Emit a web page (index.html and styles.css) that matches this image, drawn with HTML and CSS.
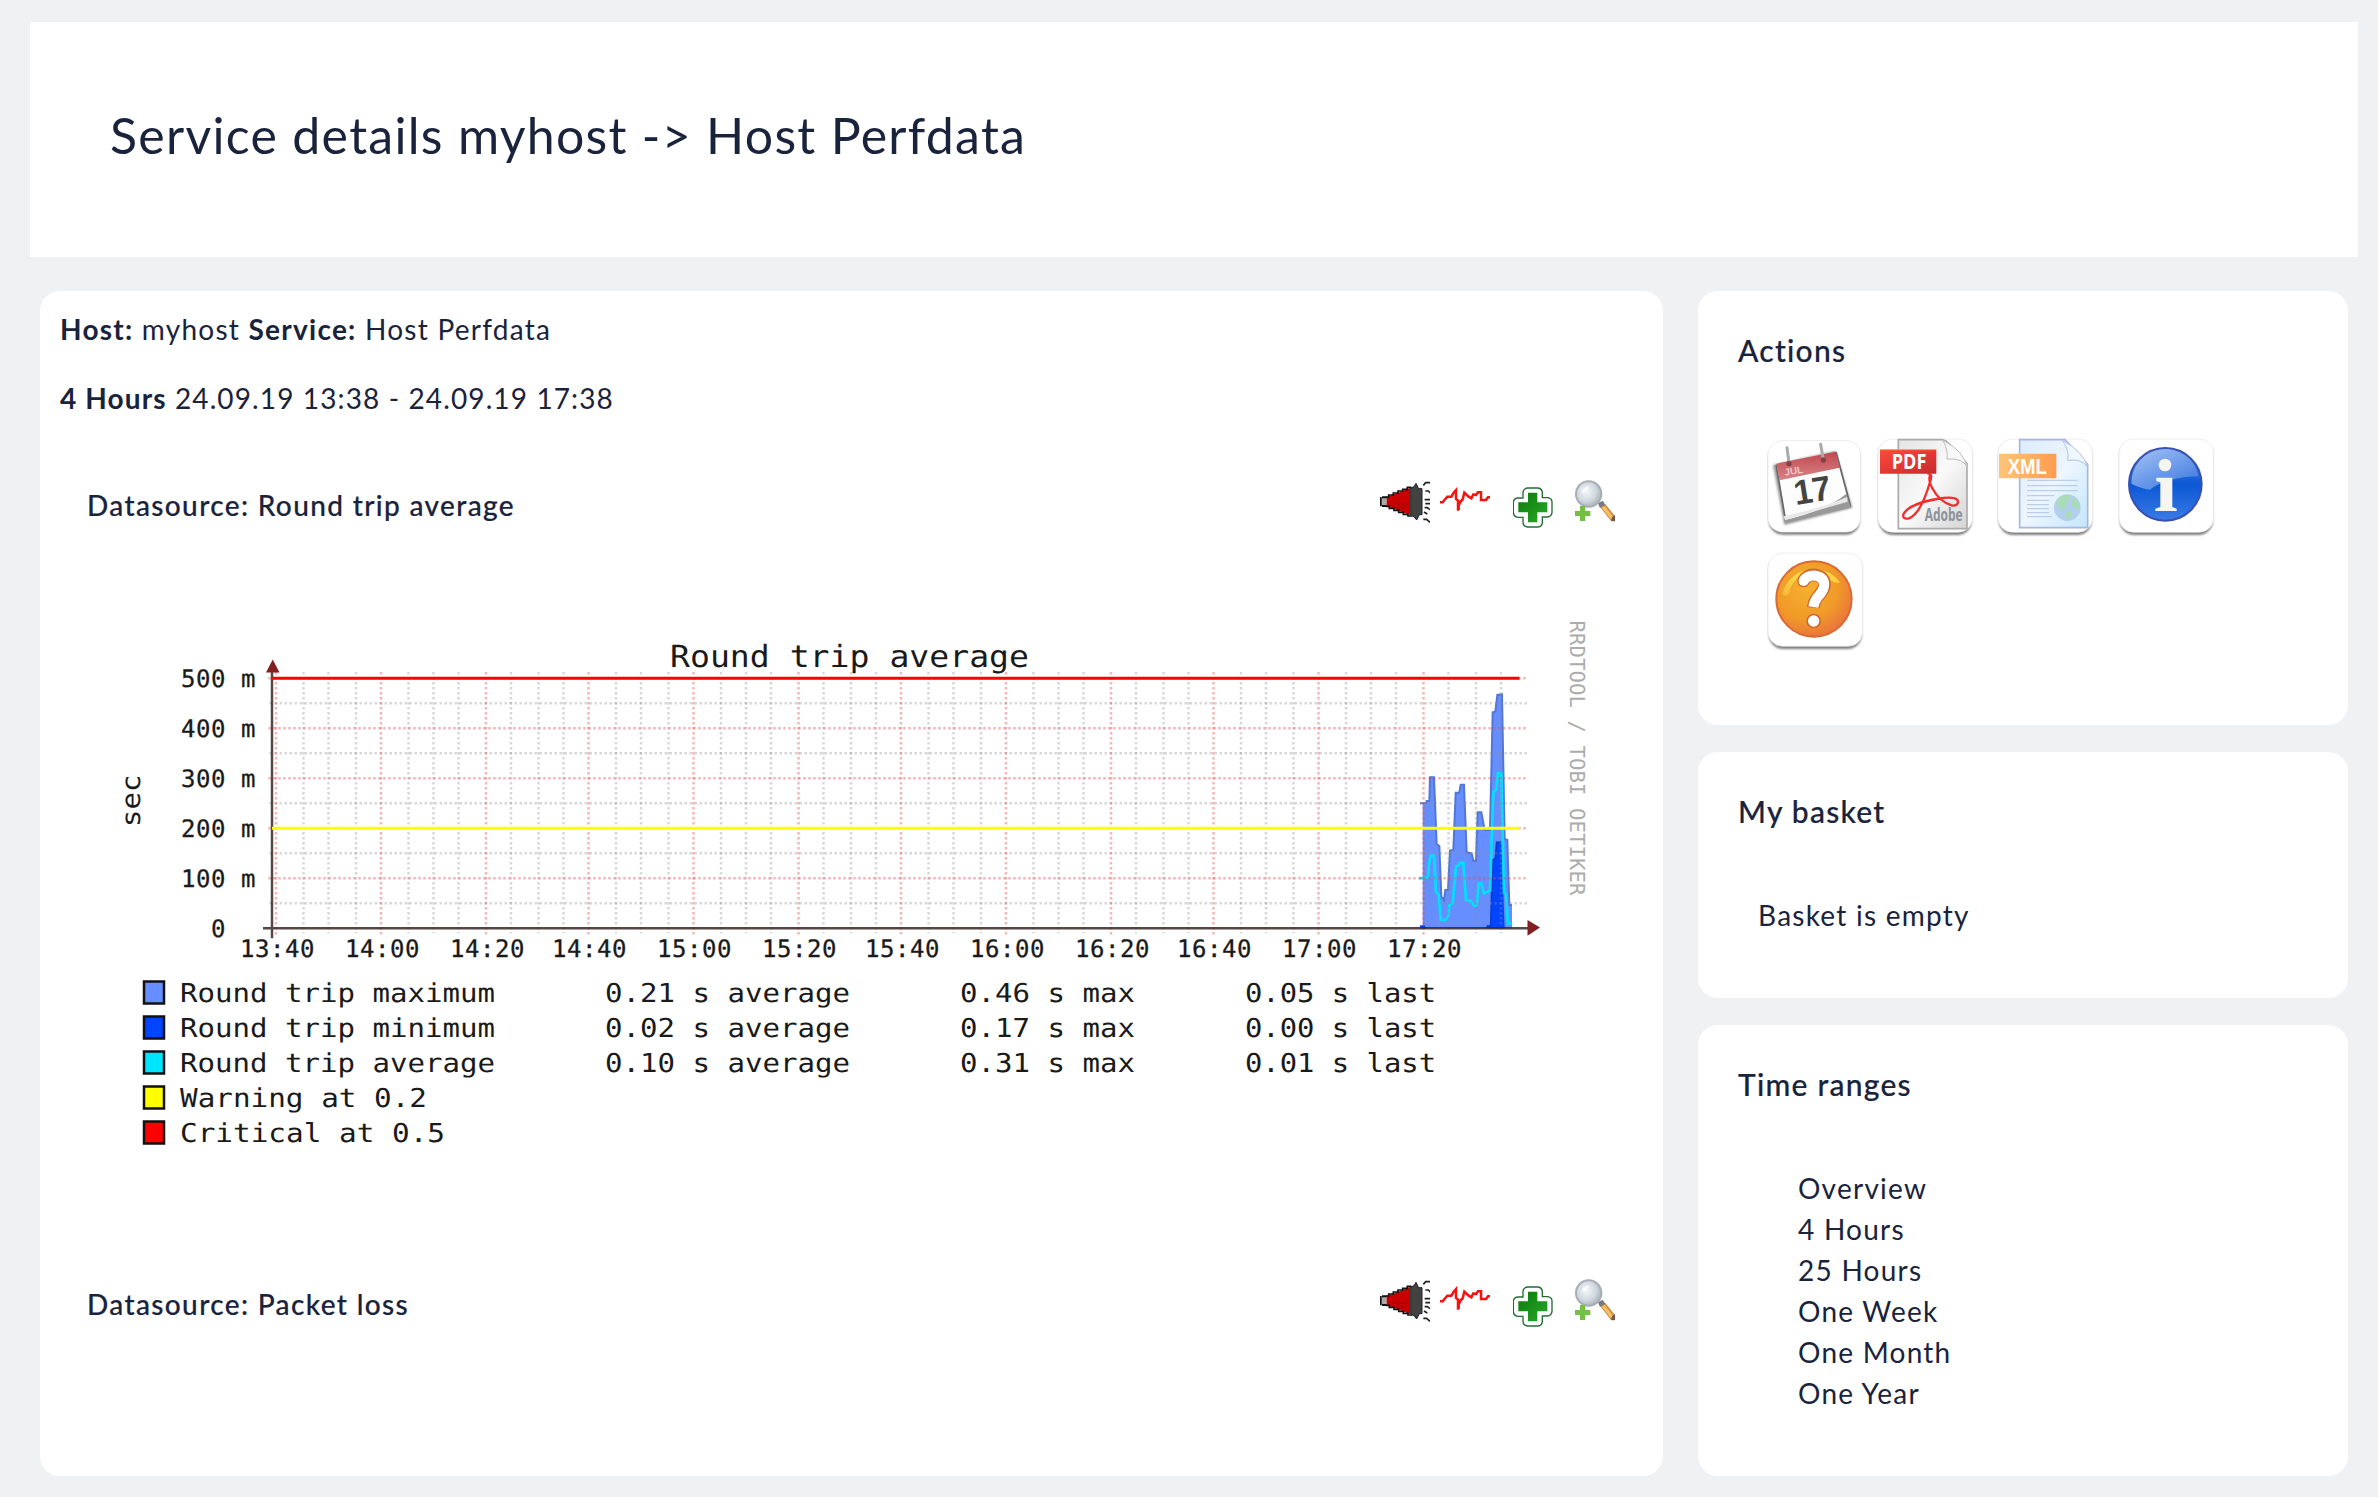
FILE: index.html
```html
<!DOCTYPE html>
<html lang="en">
<head>
<meta charset="utf-8">
<title>Service details</title>
<link rel="stylesheet" href="styles.css">
</head>
<body>
<svg class="defs" aria-hidden="true">
  <defs>
    <linearGradient id="tilePaper" x1="0" y1="0" x2="1" y2="1"><stop offset="0" stop-color="#e4e4e4"/><stop offset=".5" stop-color="#fafafa"/><stop offset="1" stop-color="#d4d4d4"/></linearGradient>
    <linearGradient id="xmlPaper" x1="0" y1="0" x2="1" y2="1"><stop offset="0" stop-color="#dcebfb"/><stop offset=".5" stop-color="#edf6ff"/><stop offset="1" stop-color="#c4e6fc"/></linearGradient>
    <linearGradient id="pdfTag" x1="0" y1="0" x2="1" y2="1"><stop offset="0" stop-color="#ff4a3c"/><stop offset="1" stop-color="#c62a2e"/></linearGradient>
    <linearGradient id="xmlTag" x1="0" y1="0" x2="1" y2="0"><stop offset="0" stop-color="#ffc578"/><stop offset="1" stop-color="#ff9c4e"/></linearGradient>
    <linearGradient id="calTop" x1="0" y1="0" x2="0" y2="1"><stop offset="0" stop-color="#bf4a50"/><stop offset="1" stop-color="#d98286"/></linearGradient>
    <linearGradient id="blueBall" x1="0" y1="0" x2="0" y2="1"><stop offset="0" stop-color="#5c8fe8"/><stop offset=".5" stop-color="#0b57d4"/><stop offset="1" stop-color="#3a7be6"/></linearGradient>
    <linearGradient id="blueShine" x1="0" y1="0" x2="1" y2="1"><stop offset="0" stop-color="#b4cdf8"/><stop offset="1" stop-color="#3f7ae0"/></linearGradient>
    <radialGradient id="orangeBall" cx=".4" cy=".35" r=".7"><stop offset="0" stop-color="#f6b030"/><stop offset=".6" stop-color="#f09a28"/><stop offset="1" stop-color="#ea7040"/></radialGradient>
    <linearGradient id="yellowShine" x1="0" y1="0" x2="0" y2="1"><stop offset="0" stop-color="#ffe04a"/><stop offset="1" stop-color="#f8b83a"/></linearGradient>
    <linearGradient id="greenCross" x1="0" y1="0" x2="1" y2="1"><stop offset="0" stop-color="#0a7a0a"/><stop offset="1" stop-color="#2aa82a"/></linearGradient>
    <radialGradient id="lens" cx=".4" cy=".4" r=".6"><stop offset="0" stop-color="#f4f7f9"/><stop offset=".7" stop-color="#cfd8de"/><stop offset="1" stop-color="#b4bcc4"/></radialGradient>
    <filter id="soft" x="-10%" y="-10%" width="120%" height="120%"><feGaussianBlur stdDeviation="3"/></filter>

    <symbol id="tile" viewBox="0 0 290 300">
      <rect x="5" y="12" width="280" height="282" rx="44" fill="#666" opacity=".85" filter="url(#soft)"/>
      <rect x="3" y="6" width="284" height="280" rx="44" fill="#fff" stroke="#e6e6e6" stroke-width="2"/>
    </symbol>

    <symbol id="horn" viewBox="60 60 150 135">
      <path d="M60 113h20v24h-20z" fill="#aaa"/>
      <path d="M62 111v28M66 112h14M66 138h14" stroke="#111" stroke-width="6"/>
      <path d="M80 112L150 84V165L80 138Z" fill="#c80000"/>
      <path d="M98 130l6 5 6-5 6 5 6-5 6 5 6-5 6 5 6-5M110 142l6 4 6-4 6 4 6-4" fill="none" stroke="#960000" stroke-width="3"/>
      <path d="M78 111H86V105H100V99H114V93H128V88H142V82H154M78 139H88V145H102V151H116V157H130V163H144V168H156" fill="none" stroke="#111" stroke-width="5"/>
      <path d="M152 84L162 80L168 70L176 86H186V164H178L170 180L162 170L152 166Z" fill="#424242" stroke="#222" stroke-width="3"/>
      <path d="M190 76L197 68H210M196 93H205L212 100M194 119h16M196 131h14M194 143h8l8 6M192 156l10 6M190 178h10l10 9" fill="none" stroke="#222" stroke-width="5"/>
    </symbol>
    <symbol id="pulse" viewBox="240 60 150 135">
      <path d="M240 127H248L254 119L262 110H274L281 98L288 90V117L294 122V152M296 150V136L302 124L308 118L313 98L326 110L334 115L340 103L348 105L354 97H363V120H378L384 112H390" fill="none" stroke="#fb1010" stroke-width="7.5"/>
    </symbol>
    <symbol id="cross" viewBox="459 60 120 144">
      <path d="M502 84H534Q546 86 547 97V113H564Q576 116 576 126V158Q574 170 562 171H547V188Q546 200 534 201H502Q490 199 489 188V172H473Q461 170 460 158V126Q462 115 474 114H489V97Q490 86 502 84Z" fill="#fff" stroke="#246b36" stroke-width="4"/>
      <path d="M504 98H532V127H562V157H532V187H504V157H475V127H504Z" fill="url(#greenCross)"/>
    </symbol>
    <symbol id="lensplus" viewBox="645 60 120 125">
      <path d="M716 136L736 132L765 168V183H753Z" fill="#c99042"/>
      <path d="M724 142L735 139L760 171L752 177Z" fill="#f6bd62"/>
      <path d="M714 130L728 122L736 134L720 144Z" fill="#777a80"/>
      <path d="M757 170l8-4v18h-12z" fill="#78564c"/>
      <circle cx="686" cy="102" r="41" fill="#a8adb6"/>
      <circle cx="686" cy="102" r="35" fill="url(#lens)"/>
      <path d="M664 98Q668 80 688 78Q684 96 664 98" fill="#fff" opacity=".7"/>
      <path d="M660 138H676V153H691V168H676V183H660V168H645V153H660Z" fill="#74c044"/>
    </symbol>
  </defs>
</svg>

<header class="page-header">
  <h1 class="page-title">Service details myhost -&gt; Host Perfdata</h1>
</header>

<div class="columns">
  <main class="card graphs">
    <p class="meta"><b>Host:</b> myhost <b>Service:</b> Host Perfdata</p>
    <p class="meta period"><b>4 Hours</b> 24.09.19 13:38 - 24.09.19 17:38</p>

    <section class="datasource">
      <div class="ds-head">
        <h2 class="ds-title">Datasource: Round trip average</h2>
        <div class="ds-tools">
          <svg class="tool horn"><use href="#horn"/></svg>
          <svg class="tool pulse"><use href="#pulse"/></svg>
          <svg class="tool cross"><use href="#cross"/></svg>
          <svg class="tool lens"><use href="#lensplus"/></svg>
        </div>
      </div>
      <svg class="chart" viewBox="0 0 1493 560">
        <g transform="translate(1273 30) scale(.33333)">
          <path d="M128 865V490H138L140 483H148L150 412H162L170 612L178 618L184 770L192 780L196 750H204L210 632L220 630L227 458H238L242 434H252L260 637L275 640L280 662H288L293 517H304L314 570H330L338 217L346 215L352 165L366 163L374 597L382 600L388 795H396V865Z" fill="#668eff"/>
          <path d="M120 490H138L140 483H148L150 412H162L170 612L178 618L184 770L192 780L196 750H204L210 632L220 630L227 458H238L242 434H252L260 637L275 640L280 662H288L293 517H304L314 570H330L338 217L346 215L352 165L366 163L374 597L382 600L388 795H396" fill="none" stroke="#5277d6" stroke-width="6"/>
          <path d="M120 865V856H134L138 865H318L322 856H332L338 660L346 655L350 607L364 605L374 865Z" fill="#0045ff"/>
          <path d="M320 858H332L338 660L346 655L350 607H364" fill="none" stroke="#0a3bd0" stroke-width="5"/>
          <path d="M118 715L144 712L146 678L152 647H162L168 757L176 762L182 840H196L206 828L208 795L218 790L228 680L238 675L240 668H250L258 780L272 783L282 798L290 795L296 730H304L312 760L330 752L340 455L348 450L354 400H364L372 757L378 765L384 850H394" fill="none" stroke="#00e0ff" stroke-width="8"/>
        </g>
        <g transform="translate(165 318.3) scale(2.5)">
          <path class="minor" d="M-1-10H502M-1-30H502M-1-50H502M-1-70H502M-1-90H502"/>
          <path class="minor" d="M12.6-102.5V2M22.6-102.5V2M33.6-102.5V2M54.6-102.5V2M64.6-102.5V2M74.6-102.5V2M95.6-102.5V2M106.6-102.5V2M116.6-102.5V2M137.6-102.5V2M147.6-102.5V2M158.6-102.5V2M179.6-102.5V2M189.6-102.5V2M199.6-102.5V2M220.6-102.5V2M231.6-102.5V2M241.6-102.5V2M262.6-102.5V2M272.6-102.5V2M283.6-102.5V2M304.6-102.5V2M314.6-102.5V2M324.6-102.5V2M345.6-102.5V2M356.6-102.5V2M366.6-102.5V2M387.6-102.5V2M397.6-102.5V2M408.6-102.5V2M429.6-102.5V2M439.6-102.5V2M449.6-102.5V2M470.6-102.5V2M481.6-102.5V2M491.6-102.5V2"/>
          <path class="major" d="M-1.5-20H502M-1.5-40H502M-1.5-60H502M-1.5-80H502M-1.5-100H502"/>
          <path class="major" d="M1.6-102.5V3M43.6-102.5V3M85.6-102.5V3M126.6-102.5V3M168.6-102.5V3M210.6-102.5V3M251.6-102.5V3M293.6-102.5V3M335.6-102.5V3M376.6-102.5V3M418.6-102.5V3M460.6-102.5V3"/>
          <path d="M0-103V4M-3.6 0H504" class="axis"/>
          <path d="M0-100H499" stroke="#f00" stroke-width="1.2"/>
          <path d="M0-40H499" stroke="#ff0" stroke-width="1.2"/>
          <path d="M-2.4-102.3H3L.3-107.5ZM502.2-3.3V3L507.2-.3Z" fill="#802020"/>
        </g>
        <g class="t-title"><text x="563" y="57" textLength="359" lengthAdjust="spacingAndGlyphs">Round trip average</text></g>
        <g class="t-axis">
          <text x="74" y="77">500 m</text><text x="74" y="127">400 m</text><text x="74" y="177">300 m</text><text x="74" y="227">200 m</text><text x="74" y="277">100 m</text><text x="104" y="327">0</text>
          <text x="133" y="347">13:40</text><text x="238" y="347">14:00</text><text x="343" y="347">14:20</text><text x="445" y="347">14:40</text><text x="550" y="347">15:00</text><text x="655" y="347">15:20</text><text x="758" y="347">15:40</text><text x="863" y="347">16:00</text><text x="968" y="347">16:20</text><text x="1070" y="347">16:40</text><text x="1175" y="347">17:00</text><text x="1280" y="347">17:20</text>
        </g>
        <g class="t-legend">
          <text transform="translate(33 217) rotate(-90)" textLength="52.5" lengthAdjust="spacingAndGlyphs">sec</text>
          <text x="73" y="392" textLength="315" lengthAdjust="spacingAndGlyphs">Round trip maximum</text><text x="498" y="392" textLength="245" lengthAdjust="spacingAndGlyphs">0.21 s average</text><text x="853" y="392" textLength="175" lengthAdjust="spacingAndGlyphs">0.46 s max</text><text x="1138" y="392" textLength="191" lengthAdjust="spacingAndGlyphs">0.05 s last</text>
          <text x="73" y="427" textLength="315" lengthAdjust="spacingAndGlyphs">Round trip minimum</text><text x="498" y="427" textLength="245" lengthAdjust="spacingAndGlyphs">0.02 s average</text><text x="853" y="427" textLength="175" lengthAdjust="spacingAndGlyphs">0.17 s max</text><text x="1138" y="427" textLength="191" lengthAdjust="spacingAndGlyphs">0.00 s last</text>
          <text x="73" y="462" textLength="315" lengthAdjust="spacingAndGlyphs">Round trip average</text><text x="498" y="462" textLength="245" lengthAdjust="spacingAndGlyphs">0.10 s average</text><text x="853" y="462" textLength="175" lengthAdjust="spacingAndGlyphs">0.31 s max</text><text x="1138" y="462" textLength="191" lengthAdjust="spacingAndGlyphs">0.01 s last</text>
          <text x="73" y="497" textLength="247" lengthAdjust="spacingAndGlyphs">Warning at 0.2</text>
          <text x="73" y="532" textLength="265" lengthAdjust="spacingAndGlyphs">Critical at 0.5</text>
        </g>
        <g stroke="#111" stroke-width="2.5">
          <rect x="37" y="371.5" width="20" height="22" fill="#668eff"/>
          <rect x="37" y="406.5" width="20" height="22" fill="#0045ff"/>
          <rect x="37" y="441.5" width="20" height="22" fill="#00e5ff"/>
          <rect x="37" y="476.5" width="20" height="22" fill="#ff0"/>
          <rect x="37" y="511.5" width="20" height="22" fill="#f00"/>
        </g>
        <text class="t-brand" transform="translate(1462.5 10.5) rotate(90)">RRDTOOL / TOBI OETIKER</text>
      </svg>
    </section>

    <section class="datasource">
      <div class="ds-head">
        <h2 class="ds-title">Datasource: Packet loss</h2>
        <div class="ds-tools">
          <svg class="tool horn"><use href="#horn"/></svg>
          <svg class="tool pulse"><use href="#pulse"/></svg>
          <svg class="tool cross"><use href="#cross"/></svg>
          <svg class="tool lens"><use href="#lensplus"/></svg>
        </div>
      </div>
    </section>
  </main>

  <aside class="side">
    <section class="card actions">
      <h2 class="side-title">Actions</h2>
      <div class="icon-grid">
        <div class="icon-row">
        <svg class="action first" viewBox="50 50 290 300">
          <use href="#tile" x="50" y="54" width="284" height="296"/>
          <path d="M68 134L256 92L306 262L102 314Z" fill="#555" opacity=".6" filter="url(#soft)"/>
          <path d="M78 136L258 98L300 256L106 302Z" fill="#fdfdfd" stroke="#666" stroke-width="5"/>
          <path d="M78 130L256 94L268 142L88 180Z" fill="url(#calTop)"/>
          <path d="M100 300Q230 270 288 220L302 262L106 308Z" fill="#999"/>
          <path d="M100 288Q220 262 290 230L292 244Q200 270 104 300Z" fill="#e8e8e8"/>
          <path d="M110 82L116 128M211 72L219 118" stroke="#aaa" stroke-width="9" stroke-linecap="round"/>
          <circle cx="116" cy="130" r="8" fill="#864044"/><circle cx="219" cy="119" r="8" fill="#864044"/>
          <text transform="translate(104 166) rotate(-9)" class="cal-month">JUL</text>
          <text transform="translate(136 254) rotate(-9)" class="cal-day" textLength="112" lengthAdjust="spacingAndGlyphs">17</text>
        </svg>
        <svg class="action" viewBox="380 50 290 300">
          <use href="#tile" x="380" y="50" width="290" height="300"/>
          <path d="M444 58H576Q588 60 596 70L650 130V325H444Z" fill="url(#tilePaper)" stroke="#aaa" stroke-width="5"/>
          <path d="M578 60Q594 90 590 116Q640 112 652 144Q640 90 578 60Z" fill="#f8f8f8" stroke="#bbb" stroke-width="3"/>
          <path d="M389 88H558V160H389Z" fill="url(#pdfTag)"/><path d="M389 88H558" stroke="#eea060" stroke-width="3"/>
          <text x="424" y="147" textLength="104" lengthAdjust="spacingAndGlyphs" class="tag-pdf">PDF</text>
          <path d="M531 160Q548 158 540 182Q512 280 476 294Q454 298 460 280Q478 250 560 236Q612 226 622 240Q626 256 606 256Q568 246 546 204Q532 176 540 164" fill="none" stroke="#f12d2d" stroke-width="7"/>
          <text x="523" y="302" textLength="114" lengthAdjust="spacingAndGlyphs" class="adobe">Adobe</text>
        </svg>
        <svg class="action gap" viewBox="52 50 290 300">
          <use href="#tile" x="52" y="50" width="290" height="300"/>
          <path d="M120 58H256L324 132V322H120Z" fill="url(#xmlPaper)" stroke="#a9b6e0" stroke-width="5"/>
          <path d="M248 60Q270 90 264 120Q306 114 324 140Q310 92 248 60Z" fill="#eef6ff" stroke="#b4bfec" stroke-width="3"/>
          <path d="M142 180H294M142 196H294M142 211H294M142 226H224M142 240H208M142 253H208M142 265H208M142 277H208M142 289H216" stroke="#bccde8" stroke-width="4"/>
          <circle cx="263" cy="262" r="40" fill="#b3cff0"/>
          <path d="M228 244Q240 222 266 224L274 234L260 248L262 260L246 272Q236 258 228 244ZM280 230Q302 244 302 264L288 268L274 250ZM256 276L276 270L280 284L262 300Z" fill="#a9dcb8"/>
          <path d="M58 100H230V174H58Z" fill="url(#xmlTag)"/>
          <text x="84" y="160" textLength="118" lengthAdjust="spacingAndGlyphs" class="tag-xml">XML</text>
        </svg>
        <svg class="action gap" viewBox="414 50 290 300">
          <use href="#tile" x="414" y="50" width="290" height="300"/>
          <circle cx="556" cy="192" r="109" fill="url(#blueBall)" stroke="#3a50b0" stroke-width="6"/>
          <path d="M454 190A102 102 0 0 1 656 168Q560 170 510 208Q480 204 454 190Z" fill="url(#blueShine)" opacity=".85"/>
          <circle cx="555" cy="134" r="19" fill="#f7f5f0"/>
          <path d="M529 172H577V260L590 265V272H526V265L541 260V186L529 182Z" fill="#f7f5f0"/>
        </svg>
        </div>
        <div class="icon-row">
        <svg class="action" viewBox="50 392 290 300">
          <use href="#tile" x="50" y="392" width="290" height="300"/>
          <circle cx="191" cy="536" r="113" fill="url(#orangeBall)" stroke="#d86a34" stroke-width="6"/>
          <path d="M96 520A98 98 0 0 1 268 484Q262 494 240 480Q190 450 150 464Q120 490 116 520Q104 532 96 520Z" fill="url(#yellowShine)"/>
          <path d="M159 482Q170 462 196 464Q226 470 222 498Q218 514 202 530Q190 544 189 562" fill="none" stroke="#d06a2c" stroke-width="38" stroke-linejoin="round"/>
          <circle cx="160" cy="482" r="19" fill="#d06a2c"/><circle cx="190" cy="602" r="22" fill="#d06a2c"/>
          <path d="M159 482Q170 464 196 466Q224 472 221 498Q218 514 202 530Q192 542 189 560" fill="none" stroke="#fff" stroke-width="30"/>
          <circle cx="160" cy="482" r="15" fill="#fff"/><circle cx="190" cy="602" r="17" fill="#fff"/>
        </svg>
        </div>
      </div>
    </section>
    <section class="card basket">
      <h2 class="side-title">My basket</h2>
      <p class="basket-text">Basket is empty</p>
    </section>
    <section class="card ranges">
      <h2 class="side-title">Time ranges</h2>
      <ul class="range-list">
        <li>Overview</li><li>4 Hours</li><li>25 Hours</li><li>One Week</li><li>One Month</li><li>One Year</li>
      </ul>
    </section>
  </aside>
</div>
</body>
</html>
```
FILE: styles.css
```css
* { box-sizing: border-box; }
body {
  margin: 0;
  padding: 22px 20px 0 30px;
  height: 1497px;
  overflow: hidden;
  background: #f0f1f3;
  color: #19233c;
  font: 400 28px/41px Lato, "Liberation Sans", sans-serif;
  letter-spacing: 1.25px;
}
h1, h2, p, ul { margin: 0; padding: 0; font-weight: 400; }
ul { list-style: none; }
svg { display: block; flex: none; }
.defs { position: absolute; width: 0; height: 0; }
.page-header { height: 235px; padding: 81px 80px 0; background: #fff; }
.page-title { font-size: 50px; line-height: 64px; letter-spacing: 1.29px; white-space: nowrap; }
.columns { display: flex; gap: 35px; padding: 34px 10px 0; height: 1219px; }
.card { background: #fff; border-radius: 20px; }
.graphs { width: 1623px; padding: 18px 20px 0; }
.meta { margin-bottom: 28px; }
.meta.period { letter-spacing: 1.12px; }
.meta b { font-weight: 700; }
.datasource { margin-top: 61px; height: 764px; padding-left: 27px; }
.datasource + .datasource { margin-top: 35px; height: auto; }
.ds-head { display: flex; justify-content: space-between; height: 60px; padding-right: 28px; }
.ds-title { padding-top: 5px; font-size: 28px; font-weight: 500; letter-spacing: 1.36px; -webkit-text-stroke: .2px currentColor; }
.ds-tools { display: flex; }
.tool.horn, .tool.pulse { width: 50px; height: 45px; }
.tool.pulse { margin-left: 10px; }
.tool.cross { width: 40px; height: 48px; margin-left: 23px; }
.tool.lens { width: 40px; height: 41.7px; margin-left: 22px; }
.chart {
  width: 1493px;
  height: 560px;
  margin: 70px 0 0 20px;
  overflow: visible;
  font-family: "DejaVu Sans Mono", monospace;
  fill: #1a1a1a;
  text-rendering: geometricPrecision;
}
.chart text { white-space: pre; }
.minor, .major { fill: none; stroke-width: 1; stroke-dasharray: 1 1; }
.minor { stroke: #8c8c8c; stroke-opacity: .34; }
.major { stroke: #e84848; stroke-opacity: .4; }
.axis { stroke: #3a2626; stroke-width: 1; stroke-opacity: .85; }
.t-title { font-size: 30.5px; letter-spacing: 0; }
.t-axis { font-size: 24px; letter-spacing: .55px; stroke: #1a1a1a; stroke-width: .3; }
.t-legend { font-size: 26px; letter-spacing: 0; }
.t-brand { font-size: 20.6px; letter-spacing: .1px; fill: #acacac; }
.side { width: 650px; display: flex; flex-direction: column; gap: 27px; }
.side .card { padding: 38.5px 40px 0; }
.actions { height: 434px; }
.basket { height: 246px; }
.ranges { height: 451px; }
.side-title { font-size: 30px; font-weight: 500; -webkit-text-stroke: .2px currentColor; }
.icon-grid { display: flex; flex-direction: column; gap: 14px; margin: 66.7px 0 0 28.7px; }
.icon-row { display: flex; }
.action { width: 96.67px; height: 100px; overflow: visible; }
.action + .action { margin-left: 13.3px; }
.action + .action.gap { margin-left: 24px; }
.action text { letter-spacing: 0; }
.cal-day { font: 700 104px "Liberation Sans", sans-serif; fill: #444; }
.cal-month { font: 700 30px "Liberation Sans", sans-serif; fill: #efc8ca; }
.tag-pdf { font: 700 64px "Open Sans", sans-serif; fill: #fff; }
.tag-xml { font: 700 66px "Liberation Sans", sans-serif; fill: #fff; }
.adobe { font: 700 52px "Open Sans", sans-serif; fill: #8b9299; }
.basket-text { padding-left: 20px; margin-top: 63.5px; }
.range-list { padding-left: 60px; margin-top: 63.5px; }
```
